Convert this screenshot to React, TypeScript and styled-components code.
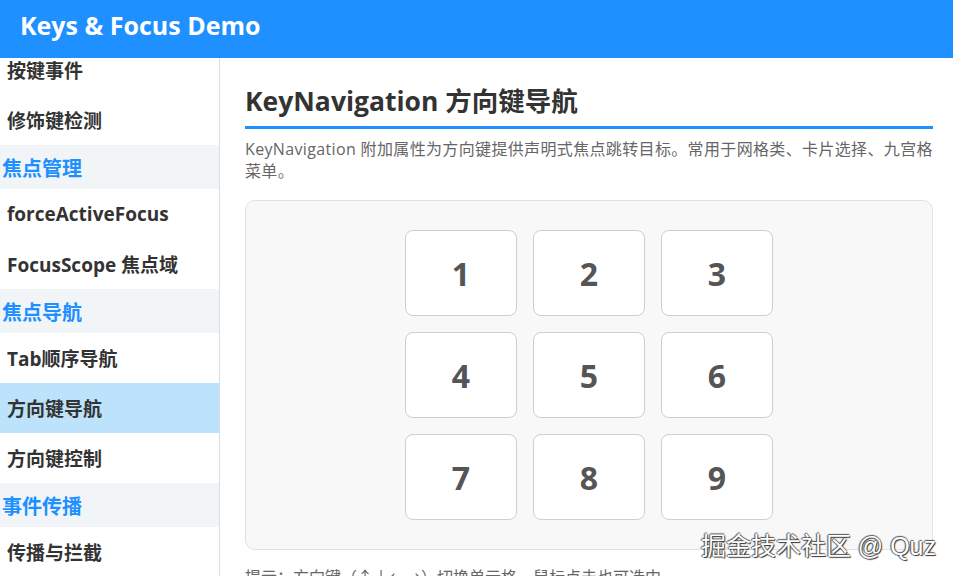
import React, { FunctionComponent } from 'react';
import styled, { createGlobalStyle } from 'styled-components';

const colours = {
  blue: '#1e90ff',
  text: '#333333',
  muted: '#666666',
  border: '#dddddd',
  groupBg: '#f2f5f8',
  selected: '#bde3fc',
};

const GlobalStyle = createGlobalStyle`
  html, body {
    margin: 0;
    padding: 0;
    height: 100%;
    overflow: hidden;
    background: #ffffff;
    font-family: "Open Sans", "Noto Sans CJK SC", sans-serif;
  }
  #root {
    height: 100%;
  }
`;

const Page = styled.div`
  position: relative;
  display: flex;
  flex-direction: column;
  height: 576px;
  width: 953px;
  overflow: hidden;
`;

const Header = styled.header`
  flex: 0 0 58px;
  box-sizing: border-box;
  display: flex;
  align-items: center;
  padding: 0 0 8px 20px;
  background: ${colours.blue};
  color: white;
  font-size: 25px;
  font-weight: 700;
`;

const Body = styled.div`
  flex: 1;
  display: flex;
  min-height: 0;
`;

const Sidebar = styled.nav`
  flex: 0 0 219px;
  border-right: 1px solid ${colours.border};
  overflow: hidden;
`;

// list is scrolled a little, so the first row sits partly under the header
const SideList = styled.div`
  margin-top: -13px;
  display: flex;
  flex-direction: column;
`;

const GroupTitle = styled.div`
  height: 44px;
  display: flex;
  align-items: center;
  padding-left: 2px;
  background: ${colours.groupBg};
  color: ${colours.blue};
  font-size: 20px;
  font-weight: 700;
`;

const NavItem = styled.div<{ $active?: boolean }>`
  height: 50px;
  display: flex;
  align-items: center;
  padding-left: 7px;
  background: ${p => (p.$active ? colours.selected : 'transparent')};
  color: ${colours.text};
  font-size: 19px;
  font-weight: 700;
`;

const Main = styled.main`
  flex: 1;
  padding: 25px 20px 0 25px;
  overflow: hidden;
`;

const Title = styled.h1`
  margin: 0;
  padding-bottom: 7px;
  border-bottom: 3px solid ${colours.blue};
  color: ${colours.text};
  font-size: 26.5px;
  font-weight: 700;
  line-height: 36px;
`;

const Description = styled.p`
  margin: 9px 0 18px;
  color: ${colours.muted};
  font-size: 16px;
  line-height: 22px;
  letter-spacing: 0.35px;
`;

const GridCard = styled.div`
  display: flex;
  justify-content: center;
  padding: 29px 0;
  background: #f8f8f8;
  border: 1px solid #e2e2e2;
  border-radius: 10px;
`;

const Grid = styled.div`
  display: grid;
  grid-template-columns: repeat(3, 112px);
  grid-auto-rows: 86px;
  gap: 16px;
`;

const Cell = styled.div`
  display: flex;
  align-items: center;
  justify-content: center;
  background: white;
  border: 1px solid #cfcfcf;
  border-radius: 8px;
  color: #555555;
  font-size: 32px;
  font-weight: 700;
`;

const Hint = styled.p`
  margin: 16px 0 0;
  color: ${colours.muted};
  font-size: 16px;
  line-height: 22px;
`;

const Watermark = styled.div`
  position: absolute;
  right: 17px;
  top: 526px;
  color: #ffffff;
  font-family: "Liberation Sans", "Noto Sans CJK SC", sans-serif;
  font-size: 25px;
  text-shadow: 1px 1px 1px #333, -1px 0 1px #555, 0 -1px 1px #555;
`;

type NavEntry = { label: string; group?: boolean; active?: boolean };

const navEntries: NavEntry[] = [
  { label: '按键事件' },
  { label: '修饰键检测' },
  { label: '焦点管理', group: true },
  { label: 'forceActiveFocus' },
  { label: 'FocusScope 焦点域' },
  { label: '焦点导航', group: true },
  { label: 'Tab顺序导航' },
  { label: '方向键导航', active: true },
  { label: '方向键控制' },
  { label: '事件传播', group: true },
  { label: '传播与拦截' },
];

const SideNav: FunctionComponent = () => (
  <Sidebar>
    <SideList>
      {navEntries.map(entry =>
        entry.group ? (
          <GroupTitle key={entry.label}>{entry.label}</GroupTitle>
        ) : (
          <NavItem key={entry.label} $active={entry.active}>{entry.label}</NavItem>
        )
      )}
    </SideList>
  </Sidebar>
);

const cells = [1, 2, 3, 4, 5, 6, 7, 8, 9];

const App: FunctionComponent = () => (
  <Page>
    <GlobalStyle />
    <Header>Keys &amp; Focus Demo</Header>
    <Body>
      <SideNav />
      <Main>
        <Title>KeyNavigation 方向键导航</Title>
        <Description>
          KeyNavigation 附加属性为方向键提供声明式焦点跳转目标。常用于网格类、卡片选择、九宫格菜单。
        </Description>
        <GridCard>
          <Grid>
            {cells.map(n => (
              <Cell key={n}>{n}</Cell>
            ))}
          </Grid>
        </GridCard>
        <Hint>提示：方向键（↑↓←→）切换单元格，鼠标点击也可选中</Hint>
      </Main>
    </Body>
    <Watermark>掘金技术社区 @ Quz</Watermark>
  </Page>
);

export default App;
